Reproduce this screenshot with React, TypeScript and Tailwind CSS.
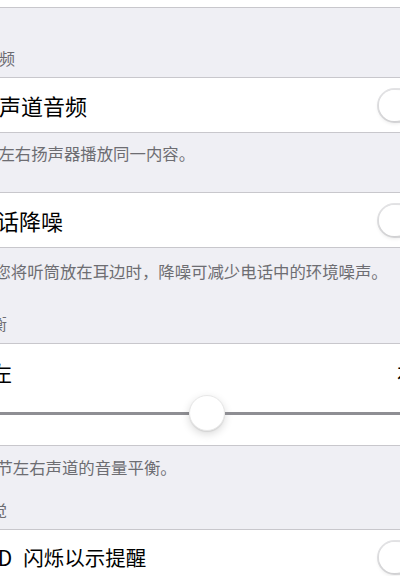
const font = { fontFamily: '"Noto Sans CJK SC", "Noto Sans", sans-serif' };

function Toggle() {
  return (
    <div className="mr-[-35px] flex h-[35px] w-[58px] shrink-0 items-center rounded-full border-2 border-[#e4e4e6] bg-white">
      <div className="h-[31px] w-[31px] rounded-full bg-white shadow-[0_2px_4px_rgba(0,0,0,0.12)]" />
    </div>
  );
}

function SwitchRow({ children }: { children: React.ReactNode }) {
  return (
    <div className="flex h-[56px] items-center justify-between border-y border-[#c8c7cc] bg-white">
      <div className="flex items-center whitespace-nowrap leading-[22px] text-black">{children}</div>
      <Toggle />
    </div>
  );
}

export default function App() {
  return (
    <div className="h-[576px] w-[400px] overflow-hidden bg-[#efeff4]" style={font}>
      {/* end of the row above */}
      <div className="h-[8px] border-b border-[#c8c7cc] bg-white" />

      <div className="h-[69px] pt-[40px] text-[16px] leading-[20px] text-[#6d6d72]">
        <span className="ml-[-17px] whitespace-nowrap">音频</span>
      </div>

      <SwitchRow>
        <span className="ml-[-23px] text-[22px]">单声道音频</span>
      </SwitchRow>

      <div className="h-[59px] pt-[10px] text-[16.4px] leading-[20px] text-[#6d6d72]">
        <div className="ml-[-18px] whitespace-nowrap">使左右扬声器播放同一内容。</div>
      </div>

      <SwitchRow>
        <span className="ml-[-25px] text-[22px]">电话降噪</span>
      </SwitchRow>

      <div className="h-[95px] pt-[13px] text-[16.4px] leading-[20px] text-[#6d6d72]">
        <div className="ml-[-22px] whitespace-nowrap">当您将听筒放在耳边时，降噪可减少电话中的环境噪声。</div>
        <div className="ml-[-25px] mt-[32px] whitespace-nowrap text-[16px]">平衡</div>
      </div>

      {/* balance */}
      <div className="h-[103px] border-y border-[#c8c7cc] bg-white pt-[17px]">
        <div className="flex items-center justify-between text-[21px] leading-[22px] text-black">
          <span className="ml-[-9px]">左</span>
          <span className="mr-[-18px]">右</span>
        </div>
        <div className="mt-[12px] flex h-[36px] items-center">
          <div className="h-[3px] w-[189px] shrink-0 bg-[#8e8e93]" />
          <div className="h-[36px] w-[36px] shrink-0 rounded-full border border-[#e8e8e8] bg-white shadow-[0_3px_8px_rgba(0,0,0,0.15),0_1px_1px_rgba(0,0,0,0.08)]" />
          <div className="h-[3px] flex-1 bg-[#8e8e93]" />
        </div>
      </div>

      <div className="h-[83px] pt-[11px] text-[16.4px] leading-[20px] text-[#6d6d72]">
        <div className="ml-[-20px] whitespace-nowrap">调节左右声道的音量平衡。</div>
        <div className="ml-[-25px] mt-[23px] whitespace-nowrap text-[16px]">视觉</div>
      </div>

      <SwitchRow>
        <span className="ml-[-26px] text-[21px]">LED</span>
        <span className="ml-[11px] text-[20.5px]">闪烁以示提醒</span>
      </SwitchRow>
    </div>
  );
}
